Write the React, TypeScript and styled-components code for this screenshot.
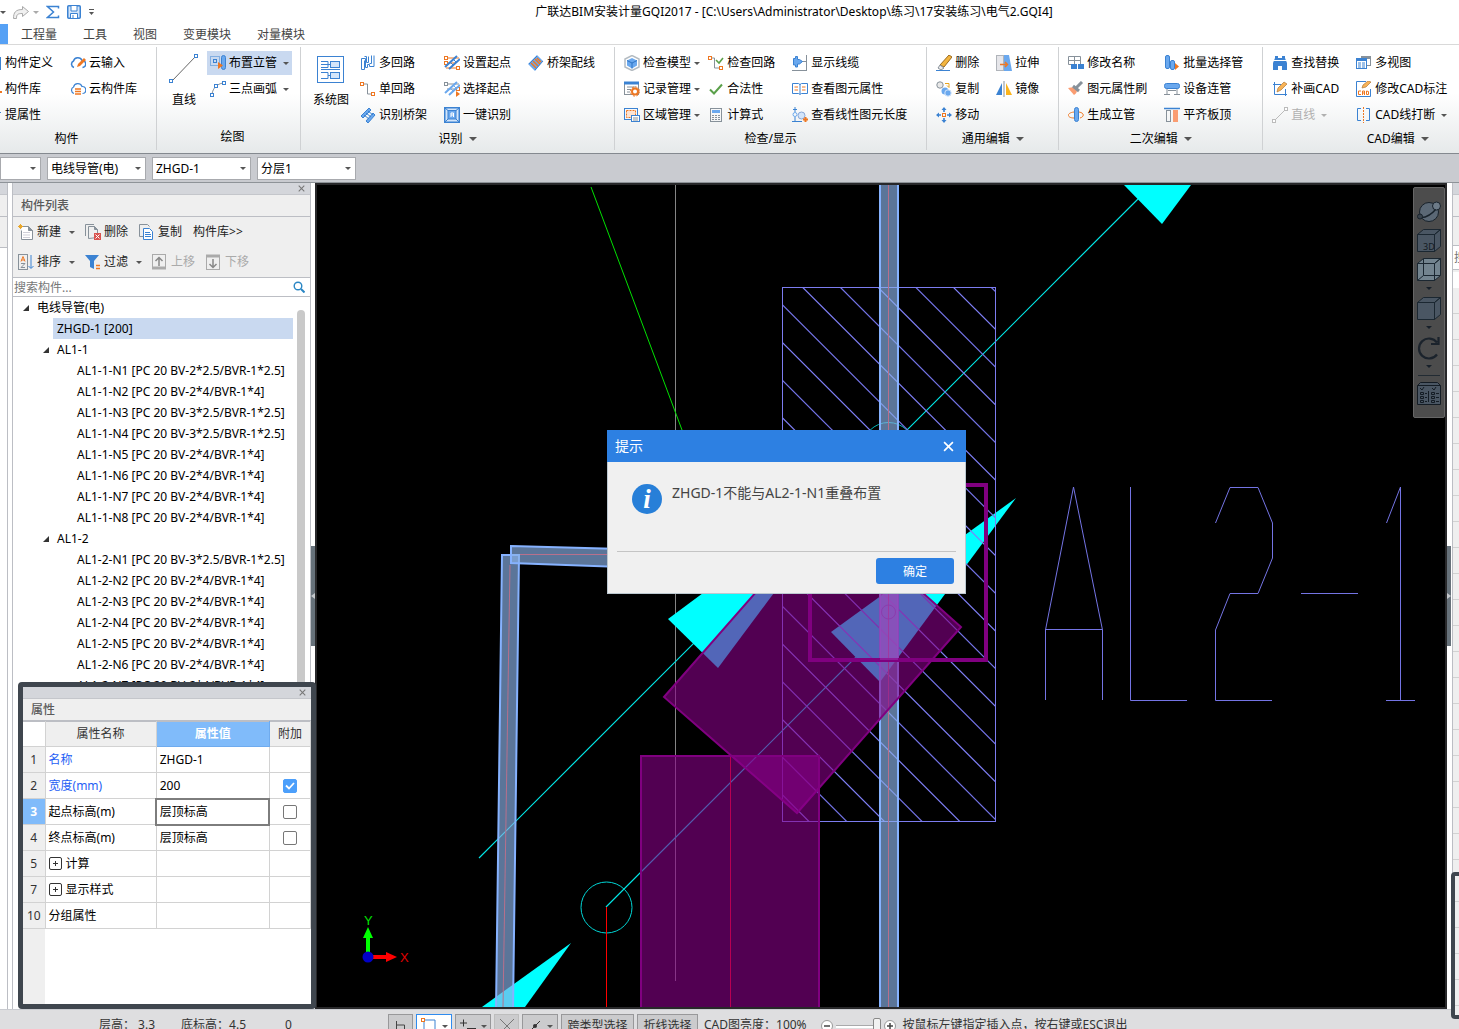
import React from "react";
import styled, { createGlobalStyle, css } from "styled-components";

const C = {
  blue: "#3b82d2",
  mid: "#6aa8ee",
  pale: "#d3e5fa",
  orange: "#ee7722",
  grey: "#87919a",
  green: "#5aa04a",
  accent: "#2d80e2",
  line: "#bcbec4",
};

const GlobalStyle = createGlobalStyle`
  *, *::before, *::after { box-sizing: border-box; }
  body { margin: 0; overflow: hidden; }
  body, button, input, select, table {
    font-family: "Noto Sans", "Noto Sans CJK SC", sans-serif;
    font-size: 12px;
    line-height: 16px;
  }
  button { border: 0; padding: 0; background: none; color: inherit; white-space: nowrap; }
  svg { display: block; flex: none; }
`;

/* ---------- shell ---------- */

const Shell = styled.div`
  position: relative;
  display: flex;
  flex-direction: column;
  height: 100vh;
  overflow: hidden;
  background: #fff;
  color: #000;
`;

const Caret = styled.span<{ $tone?: string; $big?: boolean }>`
  flex: none;
  width: 0;
  height: 0;
  border: solid transparent;
  border-width: ${(p) => (p.$big ? "4px 4px 0" : "3px 3px 0")};
  border-top-color: ${(p) => p.$tone || "#555"};
`;

const TitleBar = styled.header`
  display: flex;
  align-items: center;
  flex: 0 0 24px;
`;

const QuickAccess = styled.div`
  display: flex;
  align-items: center;
  flex: 0 0 129px;
  gap: 7px;
`;

const QuickButton = styled.button`
  display: flex;
  align-items: center;
  gap: 4px;
`;

const Title = styled.h1`
  flex: 1;
  margin: 0;
  font-size: 12px;
  font-weight: 400;
  text-align: center;
  white-space: nowrap;
`;

const TabBar = styled.nav`
  display: flex;
  flex: 0 0 21px;
  border-bottom: 1px solid #d9d9d9;
`;

const ActiveTab = styled.button`
  width: 8px;
  background: #56a1f5;
`;

const Tab = styled.button`
  padding: 2px 13px 0;
  color: #444;
`;

/* ---------- ribbon ---------- */

const Ribbon = styled.div`
  display: flex;
  flex: 0 0 109px;
  overflow: hidden;
  border-bottom: 1px solid #84898f;
  background: linear-gradient(#fff 45%, #e6e9ea);
`;

const Group = styled.section<{ $first?: boolean; $tight?: boolean; $last?: boolean }>`
  display: flex;
  flex-direction: column;
  flex: ${(p) => (p.$last ? "1 0 270px" : "none")};
  margin: 2px 0 3px ${(p) => (p.$first ? "-23px" : "0")};
  padding: 4px ${(p) => (p.$tight ? "8px" : "16px")} 0 6px;
  border-right: 1px solid #cfd1d3;
`;

const GroupBody = styled.div`
  display: flex;
  gap: 11px;
  height: 76px;
`;

const GroupColumn = styled.div<{ $pull?: boolean }>`
  display: flex;
  flex-direction: column;
  align-items: flex-start;
  gap: 2px;
  margin-left: ${(p) => (p.$pull ? "-9px" : "0")};
`;

const GroupLabel = styled.div`
  display: flex;
  align-items: center;
  justify-content: center;
  gap: 6px;
  height: 28px;
  margin-right: -10px;
`;

const Tool = styled.button<{ $active?: boolean; $disabled?: boolean; $snug?: boolean }>`
  display: flex;
  align-items: center;
  height: 24px;
  padding: 0 3px;
  gap: 3px;
  background: ${(p) => (p.$active ? "#c9d9f0" : "none")};
  color: ${(p) => (p.$disabled ? "#b0b0b0" : "#000")};
  ${Caret} { margin-left: ${(p) => (p.$snug ? "0" : "3px")}; }
`;

const BigTool = styled.button`
  display: flex;
  flex-direction: column;
  align-items: center;
  height: 60px;
  padding: 3px 6px 0;
  gap: 8px;
`;

/* ---------- context bar ---------- */

const ContextBar = styled.div`
  display: flex;
  align-items: center;
  flex: 0 0 29px;
  gap: 6px;
  border-bottom: 1px solid #8e9398;
  background: #c9cbd0;
`;

const SelectWrap = styled.label<{ $short?: boolean }>`
  position: relative;
  width: ${(p) => (p.$short ? "41px" : "99px")};
  height: 23px;
  ${Caret} { position: absolute; right: 5px; top: 10px; pointer-events: none; }
`;

const Select = styled.select`
  appearance: none;
  width: 100%;
  height: 100%;
  padding: 2px 14px 0 3px;
  border: 1px solid #a8aaae;
  border-radius: 0;
  background: #fff;
  color: #000;
`;

/* ---------- workspace ---------- */

const Workspace = styled.main`
  display: flex;
  flex: 1;
  min-height: 0;
`;

const SidePanel = styled.aside<{ $edge: "left" | "right" }>`
  display: flex;
  flex-direction: column;
  flex: 0 0 ${(p) => (p.$edge === "left" ? "8px" : "7px")};
  overflow: hidden;
  ${(p) =>
    p.$edge === "left"
      ? css`margin-right: 4px; border-right: 1px solid ${C.line};`
      : css`border-left: 1px solid ${C.line}; background: #efefef;`}
`;

const SideTools = styled.div<{ $h: number }>`
  flex: 0 0 ${(p) => p.$h}px;
  border-bottom: 1px solid ${C.line};
  background: #efefef;
`;

const SideSearch = styled.input`
  flex: 0 0 25px;
  width: 60px;
  margin: 28px 0 2px;
  padding: 0 1px;
  border: 1px solid ${C.line};
  border-left: 0;
  background: #fff;
`;

const SideRows = styled.div`
  flex: 1;
  border-top: 16px solid #fff;
  background: repeating-linear-gradient(#efefef 0 25px, #d2d2d2 25px 26px);
`;

const PanelGrip = styled.div`
  display: flex;
  align-items: center;
  justify-content: flex-end;
  flex: 0 0 12px;
  padding-right: 5px;
  border-bottom: 1px solid #c4c6cb;
  background: #d4d6db;
`;

const PanelTitle = styled.h2`
  flex: 0 0 22px;
  margin: 0;
  padding: 3px 8px 0;
  border-bottom: 1px solid ${C.line};
  background: #efefef;
  color: #5a5a5a;
  font-size: 12px;
  font-weight: 500;
`;

const ListPanel = styled.aside`
  display: flex;
  flex-direction: column;
  flex: 0 0 299px;
  overflow: hidden;
  border: solid ${C.line};
  border-width: 0 1px;
`;

const ListTools = styled.div`
  flex: 0 0 61px;
  border-bottom: 1px solid ${C.line};
  background: #efefef;
`;

const ListToolRow = styled.div`
  display: flex;
  align-items: center;
  height: 30px;
  padding-left: 5px;
  gap: 11px;
`;

const ListTool = styled.button<{ $disabled?: boolean }>`
  display: flex;
  align-items: center;
  gap: 3px;
  color: ${(p) => (p.$disabled ? "#aaa" : "#222")};
  ${Caret} { margin: 0 -1px 0 5px; }
`;

const SearchRow = styled.label`
  display: flex;
  align-items: center;
  flex: 0 0 19px;
  padding-right: 5px;
  border-bottom: 1px solid ${C.line};
`;

const SearchInput = styled.input`
  flex: 1;
  min-width: 0;
  height: 18px;
  padding: 0 1px;
  border: 0;
  outline: 0;
  background: none;
  &::placeholder { color: #777; }
`;

const TreeArea = styled.div`
  display: flex;
  flex: 1;
  min-height: 0;
  overflow: hidden;
`;

const Tree = styled.ul`
  flex: 0 0 280px;
  margin: 0;
  padding: 0;
  list-style: none;
`;

const TreeRow = styled.li<{ $level: number }>`
  display: flex;
  align-items: center;
  height: 21px;
  padding-left: ${(p) => 8 + p.$level * 20}px;
`;

const Twisty = styled.span`
  flex: 0 0 12px;
  padding-left: 1px;
`;

const TreeLabel = styled.span<{ $selected?: boolean }>`
  flex: 1;
  padding: 0 4px;
  line-height: 21px;
  white-space: nowrap;
  background: ${(p) => (p.$selected ? "#c9d9f0" : "none")};
`;

const ScrollThumb = styled.div`
  width: 8px;
  margin: 13px 0 0 4px;
  border-radius: 4px 4px 0 0;
  background: #c9c9c9;
`;

const Gutter = styled.div<{ $wide?: boolean }>`
  display: flex;
  align-items: center;
  flex: 0 0 ${(p) => (p.$wide ? "5px" : "4px")};
`;

const GutterHandle = styled.button`
  display: grid;
  place-items: center;
  width: 4px;
  height: 100px;
  background: #67727b;
`;

const CanvasFrame = styled.section`
  position: relative;
  flex: 1;
  min-width: 0;
  border: 2px solid #28282a;
  background: #000;
  overflow: hidden;
`;

const Scene = styled.svg`
  width: 100%;
  height: 100%;
`;

const ViewTools = styled.div`
  position: absolute;
  top: 2px;
  right: 0;
  display: flex;
  flex-direction: column;
  align-items: center;
  width: 32px;
  padding: 12px 0 7px;
  border: 1px solid #666;
  border-radius: 2px;
  background: #4c4c4c;
`;

const ViewTool = styled.button<{ $menu?: boolean }>`
  display: flex;
  flex-direction: column;
  align-items: center;
  gap: 5px;
  margin-bottom: ${(p) => (p.$menu ? "7px" : "5px")};
`;

const ViewRule = styled.hr`
  width: 22px;
  margin: 0 0 5px;
  border: 0;
  border-top: 1px solid #222b33;
`;

/* ---------- property window ---------- */

const FloatWindow = styled.section`
  position: absolute;
  left: 18px;
  bottom: 20px;
  display: flex;
  flex-direction: column;
  width: 298px;
  height: 327px;
  border: 5px solid #3f464e;
  border-radius: 4px;
  background: linear-gradient(90deg, #efefef 22px, #fff 22px);
`;

const EdgeWindow = styled.section`
  position: absolute;
  right: -200px;
  bottom: 10px;
  width: 208px;
  height: 147px;
  border: 4px solid #3f464e;
  border-radius: 4px;
  background: repeating-linear-gradient(#efefef 0 25px, #d2d2d2 25px 26px);
`;

const PropTable = styled.table`
  width: 288px;
  border-collapse: collapse;
  table-layout: fixed;
  border-top: 1px solid ${C.line};
`;

const HeadCell = styled.th<{ $w: number; $active?: boolean; $blank?: boolean }>`
  width: ${(p) => p.$w}px;
  height: 25px;
  padding: 0;
  border: 1px solid ${(p) => (p.$active ? "#6fabee" : "#d2d2d2")};
  border-top-width: 0;
  border-left-width: 0;
  background: ${(p) => (p.$active ? "#80bbfa" : p.$blank ? "#fff" : "#efefef")};
  color: ${(p) => (p.$active ? "#fff" : "#333")};
  font-weight: ${(p) => (p.$active ? 700 : 400)};
`;

const NumCell = styled.th<{ $active?: boolean }>`
  height: 26px;
  padding: 0;
  border: 1px solid #d2d2d2;
  border-left: 0;
  background: ${(p) => (p.$active ? "#80bbfa" : "#efefef")};
  color: ${(p) => (p.$active ? "#fff" : "#333")};
  font-weight: ${(p) => (p.$active ? 700 : 400)};
`;

const Cell = styled.td<{ $link?: boolean; $focus?: boolean }>`
  padding: 0 3px;
  border: 1px solid #d2d2d2;
  background: #fff;
  color: ${(p) => (p.$link ? "#1f5ff5" : "#000")};
  ${(p) => p.$focus && css`outline: 2px solid #7d7d7d; outline-offset: -1px;`}
`;

const CellLine = styled.span`
  display: flex;
  align-items: center;
  gap: 4px;
`;

const CheckWrap = styled.label`
  display: grid;
  justify-content: center;
  align-items: center;
  justify-items: center;
  & > * { grid-area: 1 / 1; }
`;

const Check = styled.input`
  appearance: none;
  width: 14px;
  height: 14px;
  margin: 0;
  border: 1px solid #777;
  border-radius: 2px;
  background: #fff;
  &:checked { border-color: #4c9ffb; background: #4c9ffb; }
`;

/* ---------- status bar ---------- */

const StatusBar = styled.footer`
  display: flex;
  align-items: flex-start;
  flex: 0 0 20px;
  padding-top: 4px;
  border-top: 1px solid #c9cbd0;
  overflow: hidden;
  background: #dedee0;
  color: #333;
  white-space: nowrap;
`;

const Readouts = styled.div`
  display: flex;
  flex: 0 0 388px;
  gap: 26px;
  padding: 3px 0 0 99px;
`;

const Readout = styled.span<{ $push?: boolean }>`
  margin-left: ${(p) => (p.$push ? "13px" : "0")};
`;

const StatusButton = styled.button<{ $w?: number; $on?: boolean; $dim?: boolean }>`
  display: flex;
  align-items: center;
  justify-content: center;
  flex: none;
  gap: 4px;
  width: ${(p) => (p.$w ? `${p.$w}px` : "auto")};
  height: 24px;
  margin-right: 3px;
  padding: 0 5px;
  border: 1px solid ${(p) => (p.$on ? "#2f8bee" : p.$dim ? "#bdbdbd" : "#98989a")};
  background: ${(p) => (p.$on ? "#fff" : "#cbcbcd")};
`;

const StatusText = styled.span`
  padding: 3px 3px 0;
`;

const ZoomControl = styled.div`
  display: flex;
  align-items: center;
  height: 24px;
  gap: 3px;
  padding: 0 4px 0 11px;
`;

const RoundButton = styled.button`
  display: grid;
  place-items: center;
  width: 12px;
  height: 12px;
  border: 1px solid #999;
  border-radius: 6px;
  background: #fff;
`;

const Slider = styled.input`
  appearance: none;
  width: 45px;
  height: 18px;
  margin: 0;
  background: linear-gradient(transparent 8px, #a9a9ab 8px 9px, #fff 9px 11px, transparent 11px);
  &::-webkit-slider-thumb {
    appearance: none;
    width: 8px;
    height: 17px;
    border: 1px solid #888;
    border-radius: 2px;
    background: #f2f2f2;
  }
`;

/* ---------- message box ---------- */

const Dialog = styled.section`
  position: absolute;
  left: 607px;
  top: 430px;
  width: 359px;
`;

const DialogHead = styled.header`
  display: flex;
  align-items: center;
  justify-content: space-between;
  height: 32px;
  padding: 0 12px 0 8px;
  background: ${C.accent};
  color: #fff;
`;

const DialogTitle = styled.h2`
  margin: 0;
  font-size: 14px;
  font-weight: 400;
`;

const DialogBody = styled.div`
  padding: 0 9px 9px;
  border: 1px solid #bcc8d0;
  border-top: 0;
  background: #f0f0f0;
`;

const DialogMessage = styled.div`
  display: flex;
  gap: 10px;
  height: 90px;
  padding: 22px 15px 0;
  border-bottom: 1px solid #c4c4c4;
`;

const Message = styled.p`
  margin: 0;
  color: #444;
  font-size: 14px;
  line-height: 18px;
`;

const DialogActions = styled.div`
  display: flex;
  justify-content: flex-end;
  padding: 6px 2px 0;
`;

const Primary = styled.button`
  width: 78px;
  height: 26px;
  padding-top: 2px;
  border-radius: 3px;
  background: ${C.accent};
  color: #fff;
`;

/* ---------- icons ---------- */

const Svg = ({ s = 16, children }: { s?: number; children: React.ReactNode }) => (
  <svg width={s} height={s} viewBox={`0 0 ${s} ${s}`} fill="none" stroke={C.blue} aria-hidden="true">
    {children}
  </svg>
);

const cloud = "M4 12.500a3.500 3.500 0 0 1-.5-6.500A4.500 4.500 0 0 1 12 5.500a3.500 3.500 0 0 1 .5 7";
const sq = (x: number, y: number, c: string = C.orange) => (
  <rect x={x} y={y} width="3" height="3" stroke={c} fill="#fff" />
);

const icons: Record<string, React.ReactNode> = {
  define: <Svg><rect x="2.500" y="2.500" width="12" height="12" fill={C.mid} /></Svg>,
  library: <Svg><path d="M2 3h9v9H2z" /><path d="M10 11h6M13 8v6" stroke={C.orange} strokeWidth="2" /></Svg>,
  extract: <Svg><path d="M2 5.500h13" /></Svg>,
  cloudIn: <Svg><path d={cloud} strokeWidth="1.500" /><path d="M7 12l1-3 6-6 2 2-6 6z" fill={C.orange} stroke="none" /></Svg>,
  cloudLib: <Svg><path d={cloud} strokeWidth="1.200" /><path d="M5 8h6M5 10.500h6M5 13h6" stroke={C.orange} strokeWidth="1.500" /></Svg>,
  riser: (
    <Svg>
      <rect x=".5" y="1.500" width="9" height="9" strokeDasharray="1 1" />
      <rect x="3.500" y="4.500" width="3" height="3" />
      <rect x="11.500" y=".5" width="4" height="14" rx="2" fill={C.mid} />
      <path d="M8 7v7l5-3.500z" fill={C.orange} stroke="none" />
    </Svg>
  ),
  arc: <Svg><path d="M2 13C3 7 7 3 13 2" stroke={C.grey} />{sq(0.5, 12.5, C.blue)}{sq(4.5, 3.5, C.blue)}{sq(12.5, 0.5, C.blue)}</Svg>,
  multi: <Svg><path d="M1.500 3.500h4v9h2v-3h2v2h4.500V.500M1.500 3.500v11h3v-9M8.500 1.500v6h-2v-6h-2M11.500 .5v8h-2" /></Svg>,
  single: <Svg><path d="M2 3h5.500v10h5" stroke={C.grey} />{sq(0.5, 1.5)}{sq(11.5, 11.5)}</Svg>,
  bridge: (
    <Svg>
      <path d="M1 9l8-8 2 2-8 8zM6 14l7-8 2 2-7 8z" fill={C.mid} />
      <path d="M4 8l5 4M6 6l5 4M8 4l5 4" />
    </Svg>
  ),
  setStart: (
    <Svg>
      <path d="M3 3h12M3 8h9M2 13h12" stroke={C.orange} />{sq(0.5, 1.5)}{sq(0.5, 6.5)}{sq(12.5, 11.5)}
      <path d="M1 12L13 1M5 14L16 4" strokeWidth="2" /><path d="M6 7l4 4M9 4l4 4" />
    </Svg>
  ),
  pickStart: (
    <Svg>
      <path d="M3 3h12M3 8h9" stroke={C.grey} />{sq(0.5, 1.5, C.grey)}{sq(12.5, 6.5)}
      <path d="M1 12L13 1M5 14L16 4" strokeWidth="2" stroke={C.mid} /><path d="M6 7l4 4M9 4l4 4" stroke={C.mid} />
      <path d="M12 10v6l4-3z" fill={C.orange} stroke="none" />
    </Svg>
  ),
  oneKey: (
    <Svg>
      <rect x=".75" y=".75" width="14.500" height="14.500" fill={C.pale} strokeWidth="1.500" />
      <rect x="4" y="3.500" width="8" height="8.500" fill={C.mid} />
      <path d="M1 1l3 2.500M15 1l-3 2.500M1 15l3-3M15 15l-3-3" />
      <path d="M7 10V6h2.500v4M7 8h2" stroke="#fff" />
    </Svg>
  ),
  wiring: (
    <Svg>
      <path d="M0 9l9-9 6 6-8 10z" fill={C.mid} stroke="none" />
      <path d="M3 8l5 5M5 6l5 5M7 4l5 5M9 3l4 4" stroke={C.orange} strokeWidth="1.500" />
      <path d="M1 9L9 1M7 15l8-9" />
    </Svg>
  ),
  model: (
    <Svg>
      <path d="M8 .5l7 3.500v8l-7 3.500L1 12V4z" stroke="#b5bcc2" strokeWidth="1.500" />
      <path d="M8 3l5 2.500v5L8 13.500l-5-3v-5z" fill={C.mid} stroke="none" />
      <path d="M3 5.500L8 8l5-2.500M8 8v5.500" stroke="#2f74c4" />
    </Svg>
  ),
  record: (
    <Svg>
      <rect x=".5" y="1.500" width="14" height="12" stroke={C.grey} />
      <path d="M0 2h15" strokeWidth="3" /><path d="M3 6h9M3 8.500h4M3 11h3" stroke={C.grey} />
      <circle cx="11" cy="10.500" r="3" stroke={C.orange} strokeWidth="2" fill="#fff" />
      <circle cx="11" cy="10.500" r="4.600" stroke={C.orange} strokeWidth="1" strokeDasharray="2 1.600" />
    </Svg>
  ),
  region: (
    <Svg>
      <rect x=".5" y="1.500" width="13" height="11" />
      <rect x="2.500" y="3.500" width="9" height="7" stroke={C.orange} strokeDasharray="2 1" fill="#fde3d2" />
      <rect x="7.500" y="8.500" width="8" height="6" fill="#fff" /><path d="M9 11h5M9 13h5" stroke={C.grey} />
    </Svg>
  ),
  loopCheck: (
    <Svg>
      <path d="M2 3h4.500v10h6" stroke={C.grey} />{sq(0.5, 1.5)}{sq(11.5, 11.5)}
      <path d="M8 5l3 3 4-5" stroke={C.green} strokeWidth="1.600" />
    </Svg>
  ),
  legal: <Svg><path d="M2 8.500l4 4L14 3.500" stroke={C.green} strokeWidth="2" /></Svg>,
  calc: (
    <Svg>
      <rect x="2.500" y="1.500" width="11" height="13" stroke={C.grey} />
      <rect x="4" y="3" width="8" height="3" fill={C.mid} stroke="none" />
      <path d="M4 8.500h8M4 10.500h8M4 12.500h8" stroke={C.grey} strokeDasharray="2 1" />
    </Svg>
  ),
  cable: (
    <Svg>
      <path d="M14.500 0v15.500M0 15.500h15M10 6.500h5" stroke={C.grey} />
      <path d="M1.500 3.500h2v-2h2v3h2l3 2-3 2.500h-2v3h-2v-2h-2z" fill={C.mid} />
    </Svg>
  ),
  book: (
    <Svg>
      <path d="M.5 2.500h6l1.500 1 1.500-1h6v10h-6l-1.500 1-1.500-1h-6zM8 3v10" />
      <path d="M2.500 6H6M2.500 9H6M10 6h3.500M10 9h3.500" stroke={C.orange} />
    </Svg>
  ),
  length: (
    <Svg>
      <path d="M3 0v5M3 10v5M1 2.500h4M0 14.500h10" /><circle cx="3" cy="7.500" r="2" stroke={C.mid} />
      <circle cx="9.500" cy="8.500" r="3.500" fill={C.pale} stroke="#8aa8d8" />
      <path d="M11 12.500h5M13.500 10v5" stroke={C.orange} strokeWidth="2" />
    </Svg>
  ),
  brush: (
    <Svg>
      <path d="M4 10l9-10 3 2-8 10z" fill="#f3b53f" stroke="#9c6a1e" />
      <path d="M4 10l4 3-3 2-3-2z" fill="#e9e9e9" stroke={C.grey} />
      <path d="M0 15.500h14" />
    </Svg>
  ),
  copy2: (
    <Svg>
      <circle cx="4" cy="4" r="3.200" fill="#e8e8e8" stroke={C.grey} />
      <path d="M9 2.500h4v4l-2-2" stroke="#e8a41c" />
      <circle cx="9" cy="10" r="3.500" fill={C.mid} stroke="none" /><circle cx="12" cy="12" r="3.200" fill={C.mid} stroke={C.pale} />
    </Svg>
  ),
  move: (
    <Svg>
      <path d="M8 1v4M8 11v4M1 8h4M11 8h4" strokeWidth="1.600" />
      <path d="M8 0l2.500 3h-5zM8 16l2.500-3h-5zM0 8l3-2.500v5zM16 8l-3-2.500v5z" fill={C.blue} stroke="none" />
      <rect x="6.500" y="6.500" width="3" height="3" stroke={C.orange} />
    </Svg>
  ),
  stretch: (
    <Svg>
      <rect x=".5" y=".5" width="7" height="15" fill="#e6e6ea" stroke="#b0b4ba" />
      <path d="M8 0h5l3 16H8z" fill={C.mid} stroke="none" />
      <path d="M4 9.500h7M9 7l2.500 2.500L9 12" stroke={C.orange} strokeWidth="1.500" />
    </Svg>
  ),
  mirror: (
    <Svg>
      <path d="M6 2v12H0z" fill={C.blue} stroke="none" /><path d="M10 2v12h6z" fill="#fbb41b" stroke="none" />
      <path d="M8 0v16" stroke={C.grey} />
    </Svg>
  ),
  rename: (
    <Svg>
      <path d="M.5 1.500h12v8H.5zM.5 5.500h12M6.500 1.500v8" stroke={C.grey} />
      <rect x="3" y="9" width="13" height="5" fill={C.blue} stroke="none" />
      <path d="M9.500 8v7M7.500 7.500h4M7.500 15.500h4" stroke="#fff" />
    </Svg>
  ),
  paint: (
    <Svg>
      <path d="M0 7l6 7c2-1 3-3 3-5L6 6z" fill="#fa9d72" stroke="none" />
      <path d="M5 5l6 5M8 7l6-6" stroke={C.grey} strokeWidth="3" />
    </Svg>
  ),
  genRiser: (
    <Svg>
      <path d="M6 5c-8 1-7 6 0 6M11 5c6 1 5 5 1 6" stroke={C.orange} />
      <rect x="6.500" y=".5" width="4" height="14" rx="2" fill={C.mid} />
    </Svg>
  ),
  batch: (
    <Svg>
      <rect x="1.500" y=".5" width="4" height="13" rx="1.500" fill={C.mid} /><rect x="6.500" y="5.500" width="4" height="9" rx="1.500" fill={C.mid} />
      <path d="M11 8v7l4-3.500z" fill={C.orange} stroke="none" />
    </Svg>
  ),
  device: (
    <Svg>
      <path d="M3 6v7M13 6v7M0 13.500h6M10 13.500h6M4 9.500h8" stroke={C.grey} />
      <rect x=".5" y="2.500" width="15" height="5" rx="2" fill={C.mid} />
    </Svg>
  ),
  flush: (
    <Svg>
      <path d="M0 1.500h16" strokeWidth="1.500" /><rect x="2.500" y="3.500" width="4" height="11" stroke={C.grey} />
      <rect x="9" y="3" width="5" height="12" fill="#fa9d72" stroke="none" />
    </Svg>
  ),
  find: (
    <Svg>
      <path d="M1 15V8l2-5V1h3v2h4V1h3v2l2 5v7h-5v-4H6v4z" fill={C.blue} stroke="none" />
      <path d="M0 5.500h16" stroke="#fff" />
    </Svg>
  ),
  redraw: (
    <Svg>
      <path d="M2.500 1v12.500H15M1 3.500h8M13.500 8v7" />
      <path d="M5 11l1-4 6-6 3 2-6 6z" fill="#f8b357" stroke="#b07a3a" strokeWidth=".7" />
    </Svg>
  ),
  lineOff: <Svg><path d="M2 14L14 2" stroke="#bbb" />{sq(0.5, 12.5, "#bbb")}{sq(12.5, 0.5, "#bbb")}</Svg>,
  views: (
    <Svg>
      <rect x="5.500" y="1.500" width="9" height="9" stroke={C.grey} /><path d="M5 3h10" stroke={C.grey} strokeWidth="2" />
      <rect x=".5" y="3.500" width="10" height="10" fill="#fff" /><path d="M1 5h9" strokeWidth="2" />
      <path d="M2 8h7M2 10h7M2 12h7" strokeDasharray="3 1" />
    </Svg>
  ),
  editCad: (
    <Svg>
      <path d="M10 .5H.5v15h14V8" />
      <path d="M6 7l1-3 5-4 3 1-5 5z" fill="#f8b357" stroke="#b07a3a" strokeWidth=".7" />
      <path d="M5 10H2.500v3.500H5M6.500 14v-4h2v4M6.500 12h2M10.500 10v3.500h2V10.500z" stroke={C.orange} />
    </Svg>
  ),
  split: (
    <Svg>
      <path d="M5 1.500H1.500v12H5M10 1.500h3.500v12H10" /><path d="M7.500 0v16" stroke={C.orange} strokeDasharray="2 1" />
    </Svg>
  ),
  fresh: (
    <Svg>
      <path d="M4.500 2.500h6l4 4v9h-11v-9" stroke={C.grey} fill="#fff" /><path d="M10.500 2.500v4h4z" fill={C.grey} stroke={C.grey} />
      <path d="M5 8.500h7M5 11h7M5 13.500h7" stroke="#cfcfd8" />
      <path d="M2.500 0v5M0 2.500h5M1 1l3 3M4 1L1 4" stroke="#e9a72b" />
    </Svg>
  ),
  remove: (
    <Svg>
      <path d="M.5 12V.5H9M3.500 14.500v-12h6l3 3v8z" stroke={C.grey} /><path d="M9.500 2.500v3h3z" fill={C.grey} stroke={C.grey} />
      <rect x="9" y="9" width="7" height="7" fill="#d9534f" stroke="none" /><path d="M10.500 10.500l4 4M14.500 10.500l-4 4" stroke="#fff" />
    </Svg>
  ),
  duplicate: (
    <Svg>
      <path d="M.5 12.500V.5h8l2 2M.5 12.500H4" stroke={C.grey} /><path d="M4.500 4.500h6l3 3v8h-9z" fill="#fff" />
      <path d="M6 8.500h5M6 10.500h6M6 12.500h6" />
    </Svg>
  ),
  sort: (
    <Svg>
      <rect x=".5" y=".5" width="9" height="15" stroke={C.grey} /><path d="M3 7.500l2-5 2 5M3.500 6h3" stroke={C.orange} />
      <path d="M3 9.500h4l-4 4h4" stroke={C.grey} /><path d="M13 1v13M10.500 12l2.500 2.500L15.500 12" />
    </Svg>
  ),
  filter: (
    <Svg>
      <path d="M0 1h14L9 7v8l-4-2V7z" fill={C.blue} stroke="none" /><path d="M11 11.500h4M11 14.500h4" stroke={C.orange} strokeWidth="1.500" />
    </Svg>
  ),
  up: <Svg><rect x=".5" y=".5" width="13" height="14" stroke="#aaa" /><path d="M0 14h14" stroke="#aaa" strokeWidth="3" /><path d="M7 12V4M3.500 7L7 3.500 10.500 7" stroke="#888" strokeWidth="1.500" /></Svg>,
  down: <Svg><rect x=".5" y="1.500" width="13" height="14" stroke="#aaa" /><path d="M0 2h14" stroke="#aaa" strokeWidth="3" /><path d="M7 5v8M3.500 10L7 13.500 10.500 10" stroke="#888" strokeWidth="1.500" /></Svg>,
};

const Close = ({ s = 7, tone = "#777" }: { s?: number; tone?: string }) => (
  <svg width={s} height={s} viewBox="0 0 10 10" stroke={tone} strokeWidth="1.500" aria-hidden="true">
    <path d="M1 1l8 8M9 1L1 9" />
  </svg>
);

const Cube = ({ glass, label }: { glass?: boolean; label?: string }) => (
  <svg width="24" height="24" viewBox="0 0 24 24" stroke="#1b2731" fill={glass ? "#73848f" : "#4a5663"} aria-hidden="true">
    <path d="M.5 5.500h17v17H.5zM.5 5.500l6-5h17l-6 5zM17.500 5.500l6-5v17l-6 5z" />
    {glass && <path d="M6.500.5v17h17M.5 22.500l6-5" fill="none" />}
    {label && <text x="6" y="21" fontSize="9" stroke="none" fill="#121a22" fontFamily="Noto Sans">{label}</text>}
  </svg>
);

/* ---------- data ---------- */

type Item = { icon: string; text: string; menu?: boolean; active?: boolean; off?: boolean };
type GroupData = {
  name: string;
  menu?: boolean;
  snug?: boolean;
  big?: { icon: React.ReactNode; text: string };
  columns: Item[][];
};

const groups: GroupData[] = [
  {
    name: "构件",
    columns: [
      [{ icon: "define", text: "构件定义" }, { icon: "library", text: "构件库" }, { icon: "extract", text: "提属性" }],
      [{ icon: "cloudIn", text: "云输入" }, { icon: "cloudLib", text: "云构件库" }],
    ],
  },
  {
    name: "绘图",
    big: {
      text: "直线",
      icon: <Svg s={30}><path d="M3 27L27 2" stroke="#666" />{sq(0.5, 25.5, C.blue)}{sq(25.5, 0.5, C.blue)}</Svg>,
    },
    columns: [[{ icon: "riser", text: "布置立管", menu: true, active: true }, { icon: "arc", text: "三点画弧", menu: true }]],
  },
  {
    name: "识别",
    menu: true,
    big: {
      text: "系统图",
      icon: (
        <Svg s={30}>
          <rect x="1.500" y="2.500" width="26" height="26" />
          <path d="M5 7.500h7v6H5M5 10.500h7M14 10.500h-2M5 15.500h19M5 18.500h7v6H5M14 21.500h-2" />
          <rect x="14.500" y="7.500" width="9" height="6" fill={C.pale} /><rect x="14.500" y="18.500" width="9" height="6" fill={C.pale} />
        </Svg>
      ),
    },
    columns: [
      [{ icon: "multi", text: "多回路" }, { icon: "single", text: "单回路" }, { icon: "bridge", text: "识别桥架" }],
      [{ icon: "setStart", text: "设置起点" }, { icon: "pickStart", text: "选择起点" }, { icon: "oneKey", text: "一键识别" }],
      [{ icon: "wiring", text: "桥架配线" }],
    ],
  },
  {
    name: "检查/显示",
    snug: true,
    columns: [
      [{ icon: "model", text: "检查模型", menu: true }, { icon: "record", text: "记录管理", menu: true }, { icon: "region", text: "区域管理", menu: true }],
      [{ icon: "loopCheck", text: "检查回路" }, { icon: "legal", text: "合法性" }, { icon: "calc", text: "计算式" }],
      [{ icon: "cable", text: "显示线缆" }, { icon: "book", text: "查看图元属性" }, { icon: "length", text: "查看线性图元长度" }],
    ],
  },
  {
    name: "通用编辑",
    menu: true,
    columns: [
      [{ icon: "brush", text: "删除" }, { icon: "copy2", text: "复制" }, { icon: "move", text: "移动" }],
      [{ icon: "stretch", text: "拉伸" }, { icon: "mirror", text: "镜像" }],
    ],
  },
  {
    name: "二次编辑",
    menu: true,
    columns: [
      [{ icon: "rename", text: "修改名称" }, { icon: "paint", text: "图元属性刷" }, { icon: "genRiser", text: "生成立管" }],
      [{ icon: "batch", text: "批量选择管" }, { icon: "device", text: "设备连管" }, { icon: "flush", text: "平齐板顶" }],
    ],
  },
  {
    name: "CAD编辑",
    menu: true,
    columns: [
      [{ icon: "find", text: "查找替换" }, { icon: "redraw", text: "补画CAD" }, { icon: "lineOff", text: "直线", menu: true, off: true }],
      [{ icon: "views", text: "多视图" }, { icon: "editCad", text: "修改CAD标注" }, { icon: "split", text: "CAD线打断", menu: true }],
    ],
  },
];

const thin = "BV-2*4/BVR-1*4";
const circuits = (box: string, specs: string[]) =>
  specs.map((spec, i) => ({ level: 2, text: `${box}-N${i + 1} [PC 20 ${spec}]`, open: false, selected: false }));

const tree = [
  { level: 0, text: "电线导管(电)", open: true, selected: false },
  { level: 1, text: "ZHGD-1 [200]", open: false, selected: true },
  { level: 1, text: "AL1-1", open: true, selected: false },
  ...circuits("AL1-1", ["BV-2*2.5/BVR-1*2.5", thin, "BV-3*2.5/BVR-1*2.5", "BV-3*2.5/BVR-1*2.5", thin, thin, thin, thin]),
  { level: 1, text: "AL1-2", open: true, selected: false },
  ...circuits("AL1-2", ["BV-3*2.5/BVR-1*2.5", thin, thin, thin, thin, thin, thin]),
];

const properties: { n: number; name: string; value?: string; link?: boolean; check?: boolean; focus?: boolean; fold?: boolean }[] = [
  { n: 1, name: "名称", value: "ZHGD-1", link: true },
  { n: 2, name: "宽度(mm)", value: "200", link: true, check: true },
  { n: 3, name: "起点标高(m)", value: "层顶标高", check: false, focus: true },
  { n: 4, name: "终点标高(m)", value: "层顶标高", check: false },
  { n: 5, name: "计算", fold: true },
  { n: 7, name: "显示样式", fold: true },
  { n: 10, name: "分组属性" },
];

/* ---------- drawing ---------- */

const CYAN = "#00ffff";
const PLUM = "#800080";
const hatch = Array.from({ length: 20 }, (_, i) => 606 + (i - 14) * 37.7);

const Drawing = () => (
  <Scene viewBox="317 185 1128 822" preserveAspectRatio="xMinYMin slice" fill="none" role="img" aria-label="CAD">
    <defs>
      <clipPath id="box"><rect x="782" y="288" width="214" height="534" /></clipPath>
    </defs>
    <path d="M675.500 185V981" stroke="#858585" />
    <path d="M591 187L700 478" stroke="#00e000" />
    <path d="M479 858L1145 192M606 907L900 613" stroke="#00e5e5" strokeWidth="1.200" />
    <g fill={CYAN}>
      <path d="M1124 185h67l-29 39z" />
      <path d="M668 619l50 49L861 476z" />
      <path d="M831 632l49 50L1016 498z" />
      <path d="M571 943l-89 64h43z" />
    </g>
    <circle cx="606.500" cy="907.500" r="25.500" stroke="#00d5d5" />
    <circle cx="888.500" cy="448.500" r="26" stroke="#00b5b5" />
    <path d="M606.500 907v100M730.500 757v250" stroke="#ff0000" />
    <g clipPath="url(#box)">
      {hatch.map((y, i) => (
        <path key={i} d={`M782 ${y}l214 214`} stroke={i % 2 ? "#8080f8" : "#7474e8"} strokeWidth="1.200" />
      ))}
    </g>
    <rect x="782.500" y="287.500" width="213" height="534" stroke="#7c7cf0" />
    <g fill="#8ab2e8" fillOpacity=".66" stroke="#86b2ff" strokeWidth="2">
      <rect x="880" y="180" width="18" height="840" />
      <path d="M502 555h17L513 1010H496z" />
      <path d="M511 546l110 3v18l-110-4z" />
    </g>
    <path d="M888.500 185v822M510 565L503 1007M520 554.500h90" stroke="#b8708c" />
    <g fill="#880088" fillOpacity=".6" stroke={PLUM} strokeWidth="2">
      <path d="M664 697L829 509 961 627 797 813z" />
      <rect x="641" y="756" width="178" height="260" />
    </g>
    <rect x="810" y="485" width="176" height="175" stroke={PLUM} strokeWidth="4" />
    <rect x="880" y="590" width="18" height="70" fill="#a850c8" fillOpacity=".35" />
    <circle cx="888.500" cy="612" r="7" stroke="#8c3cae" />
    <g stroke="#7474e4">
      <path d="M1045.500 700V630L1073.500 487 1102.500 630V700M1045 629.500h57" />
      <path d="M1130.500 487V700.500H1187" />
      <path d="M1215.500 523L1230 487.500H1258L1272.500 523V558L1258 593.500H1230L1215.500 630V700.500H1272" />
      <path d="M1301 593.500h57" />
      <path d="M1386.500 523L1400.500 487V700M1386 700.500h29" />
    </g>
    <path d="M368 957V936" stroke="#00ff00" strokeWidth="4" />
    <path d="M363 938l5-11 5 11z" fill="#00ff00" />
    <path d="M368 957H387" stroke="#ff0000" strokeWidth="4" />
    <path d="M386 952l11 5-11 5z" fill="#ff0000" />
    <circle cx="368" cy="957" r="5.500" fill="#0000c8" />
    <text x="364" y="925" fontSize="13" fill="#00e000" fontFamily="Liberation Sans">Y</text>
    <text x="400" y="962" fontSize="13" fill="#e00000" fontFamily="Liberation Sans">X</text>
  </Scene>
);

const ViewPalette = () => (
  <ViewTools>
    <ViewTool aria-label="动态观察">
      <svg width="24" height="24" viewBox="0 0 24 24" fill="#5b6875" stroke="#18222b" aria-hidden="true">
        <circle cx="12" cy="12" r="9.500" /><path d="M1 17c6 2 13-2 19-9" fill="none" strokeWidth="1.500" />
        <circle cx="19.500" cy="6" r="4" fill="#6d7b88" /><circle cx="3" cy="16.500" r="2.500" fill="#39434d" />
      </svg>
    </ViewTool>
    <ViewTool aria-label="三维"><Cube label="3D" /></ViewTool>
    <ViewTool $menu aria-label="线框"><Cube glass /><Caret $tone="#17202a" /></ViewTool>
    <ViewTool $menu aria-label="实体"><Cube /><Caret $tone="#17202a" /></ViewTool>
    <ViewTool $menu aria-label="旋转">
      <svg width="24" height="24" viewBox="0 0 24 24" fill="none" stroke="#1b232c" strokeWidth="2.200" aria-hidden="true">
        <path d="M20 18.500A10 10 0 1 1 20 6.500M21.500 1v7H14" />
      </svg>
      <Caret $tone="#17202a" />
    </ViewTool>
    <ViewRule />
    <ViewTool aria-label="显示设置">
      <svg width="24" height="24" viewBox="0 0 24 24" fill="#4a5663" stroke="#141c24" aria-hidden="true">
        <path d="M.5 4.500l3-3h17l3 3v19H.5zM.5 4.500h23M11.500 10v11" />
        <path d="M3 7l2 2 2-3M15 7l2 2 2-3M3.500 11.500h3v2h-3zM3.500 15.500h3v2h-3zM3.500 19.500h3v2h-3zM14.500 11.500h3v2h-3zM14.500 15.500h3v2h-3zM14.500 19.500h3v2h-3zM8 12.500h2M8 16.500h2M8 20.500h2M19 12.500h3M19 16.500h3M19 20.500h3" fill="none" />
      </svg>
    </ViewTool>
  </ViewTools>
);

/* ---------- app ---------- */

const RibbonGroup = ({ data, index }: { data: GroupData; index: number }) => (
  <Group $first={index === 0} $tight={index === 1} $last={index === groups.length - 1}>
    <GroupBody>
      {data.big && (
        <BigTool>
          {data.big.icon}
          {data.big.text}
        </BigTool>
      )}
      {data.columns.map((items, i) => (
        <GroupColumn key={i} $pull={(i === 0 && !!data.big) || (i === 1 && data.snug)}>
          {items.map((t) => (
            <Tool key={t.text} $active={t.active} $disabled={t.off} $snug={data.snug} disabled={t.off}>
              {icons[t.icon]}
              {t.text}
              {t.menu && <Caret $tone={t.off ? "#b0b0b0" : undefined} />}
            </Tool>
          ))}
        </GroupColumn>
      ))}
    </GroupBody>
    <GroupLabel>
      {data.name}
      {data.menu && <Caret $big />}
    </GroupLabel>
  </Group>
);

const ComboBox = ({ label, value, short }: { label: string; value: string; short?: boolean }) => (
  <SelectWrap $short={short}>
    <Select aria-label={label} defaultValue={value}>
      <option>{value}</option>
    </Select>
    <Caret />
  </SelectWrap>
);

export default function App() {
  return (
    <Shell>
      <GlobalStyle />
      <TitleBar>
        <QuickAccess>
          <QuickButton aria-label="撤销"><Caret /></QuickButton>
          <QuickButton aria-label="重做">
            <Svg><path d="M.5 14.500c0-6 2-9 9-9v-3l6 5-6 5v-3c-5 0-6 1-6 5z" fill="#f0f0f0" stroke="#aaa" /></Svg>
            <Caret $tone="#aaa" />
          </QuickButton>
          <QuickButton aria-label="汇总计算">
            <Svg s={14}><path d="M12.500 3.500v-2h-11l6 5.500-6 5.500h11v-2" strokeWidth="1.500" /></Svg>
          </QuickButton>
          <QuickButton aria-label="保存">
            <Svg s={14}><rect x=".75" y=".75" width="12.500" height="12.500" rx="1" fill={C.pale} strokeWidth="1.500" /><path d="M4 1v5h6V1M3.500 13V8.500h7V13M6 10v3" fill="#fff" /></Svg>
          </QuickButton>
          <QuickButton aria-label="自定义">
            <Svg s={8}><path d="M1 1.500h5" stroke="#555" /><path d="M1 4h5L3.500 7z" fill="#555" stroke="none" /></Svg>
          </QuickButton>
        </QuickAccess>
        <Title>{"广联达BIM安装计量GQI2017 - [C:\\Users\\Administrator\\Desktop\\练习\\17安装练习\\电气2.GQI4]"}</Title>
      </TitleBar>
      <TabBar>
        <ActiveTab aria-label="绘图" />
        {["工程量", "工具", "视图", "变更模块", "对量模块"].map((t) => <Tab key={t}>{t}</Tab>)}
      </TabBar>
      <Ribbon>
        {groups.map((g, i) => <RibbonGroup key={g.name} data={g} index={i} />)}
      </Ribbon>
      <ContextBar>
        <ComboBox label="专业" value="" short />
        <ComboBox label="构件类型" value="电线导管(电)" />
        <ComboBox label="构件" value="ZHGD-1" />
        <ComboBox label="分层" value="分层1" />
      </ContextBar>

      <Workspace>
        <SidePanel $edge="left">
          <PanelGrip />
          <SideTools $h={22} />
          <SideTools $h={31} />
        </SidePanel>
        <ListPanel>
          <PanelGrip><button aria-label="关闭构件列表"><Close /></button></PanelGrip>
          <PanelTitle>构件列表</PanelTitle>
          <ListTools>
            <ListToolRow>
              <ListTool>{icons.fresh}新建<Caret /></ListTool>
              <ListTool>{icons.remove}删除</ListTool>
              <ListTool>{icons.duplicate}复制</ListTool>
              <ListTool>{"构件库>>"}</ListTool>
            </ListToolRow>
            <ListToolRow>
              <ListTool>{icons.sort}排序<Caret /></ListTool>
              <ListTool>{icons.filter}过滤<Caret /></ListTool>
              <ListTool $disabled disabled>{icons.up}上移</ListTool>
              <ListTool $disabled disabled>{icons.down}下移</ListTool>
            </ListToolRow>
          </ListTools>
          <SearchRow>
            <SearchInput aria-label="搜索构件" placeholder="搜索构件..." />
            <svg width="12" height="12" viewBox="0 0 12 12" fill="none" stroke="#2a86c4" strokeWidth="1.400" aria-hidden="true">
              <circle cx="5" cy="5" r="3.800" /><path d="M8 8l3.500 3.500" strokeWidth="2" />
            </svg>
          </SearchRow>
          <TreeArea>
            <Tree>
              {tree.map((n) => (
                <TreeRow key={n.text} $level={n.level}>
                  <Twisty>
                    {n.open && <svg width="8" height="8" viewBox="0 0 8 8" aria-hidden="true"><path d="M7 1v6H1z" fill="#333" /></svg>}
                  </Twisty>
                  <TreeLabel $selected={n.selected}>{n.text}</TreeLabel>
                </TreeRow>
              ))}
            </Tree>
            <ScrollThumb />
          </TreeArea>
        </ListPanel>
        <Gutter>
          <GutterHandle aria-label="收起左侧">
            <svg width="4" height="6" viewBox="0 0 4 6" aria-hidden="true"><path d="M4 0v6L0 3z" fill="#c4c8cc" /></svg>
          </GutterHandle>
        </Gutter>
        <CanvasFrame>
          <Drawing />
          <ViewPalette />
        </CanvasFrame>
        <Gutter $wide>
          <GutterHandle aria-label="收起右侧">
            <svg width="4" height="6" viewBox="0 0 4 6" aria-hidden="true"><path d="M0 0v6l4-3z" fill="#c4c8cc" /></svg>
          </GutterHandle>
        </Gutter>
        <SidePanel $edge="right">
          <PanelGrip />
          <SideTools $h={22} />
          <SideSearch aria-label="搜索" placeholder="搜索" />
          <SideRows />
        </SidePanel>
      </Workspace>

      <StatusBar>
        <Readouts>
          <Readout>层高： 3.3</Readout>
          <Readout>底标高：4.5</Readout>
          <Readout $push>0</Readout>
        </Readouts>
        <StatusButton $w={25} aria-label="正交"><Svg s={14}><path d="M2.500 2v9h8V6h-8" stroke="#444" /></Svg></StatusButton>
        <StatusButton $w={36} $on aria-label="捕捉"><Svg s={18}><path d="M3 3h12v14M4 3v14" />{sq(1.5, 1.5)}</Svg><Caret /></StatusButton>
        <StatusButton $w={36} aria-label="偏移"><Svg s={18}><path d="M1 6h7M4.500 2.500v7M8 11.500h9" stroke="#333" /></Svg><Caret /></StatusButton>
        <StatusButton $w={25} $dim aria-label="交点"><Svg><path d="M1 1l14 14M15 1L1 15" stroke="#777" /></Svg></StatusButton>
        <StatusButton $w={36} aria-label="中点"><Svg><path d="M3 13L13 3" stroke="#333" /><circle cx="8" cy="8" r="2" fill="#333" stroke="none" /></Svg><Caret /></StatusButton>
        <StatusButton $w={73}>跨类型选择</StatusButton>
        <StatusButton $w={61}>折线选择</StatusButton>
        <StatusText>CAD图亮度：100%</StatusText>
        <ZoomControl>
          <RoundButton aria-label="调暗"><Svg s={6}><path d="M0 3h6" stroke="#444" strokeWidth="1.500" /></Svg></RoundButton>
          <Slider type="range" aria-label="CAD图亮度" defaultValue={100} />
          <RoundButton aria-label="调亮"><Svg s={6}><path d="M0 3h6M3 0v6" stroke="#444" strokeWidth="1.500" /></Svg></RoundButton>
        </ZoomControl>
        <StatusText>按鼠标左键指定插入点，按右键或ESC退出</StatusText>
      </StatusBar>

      <FloatWindow>
        <PanelGrip><button aria-label="关闭属性"><Close /></button></PanelGrip>
        <PanelTitle>属性</PanelTitle>
        <PropTable>
          <thead>
            <tr>
              <HeadCell $w={22} $blank aria-label="序号" />
              <HeadCell $w={111}>属性名称</HeadCell>
              <HeadCell $w={113} $active>属性值</HeadCell>
              <HeadCell $w={41}>附加</HeadCell>
            </tr>
          </thead>
          <tbody>
            {properties.map((p) => (
              <tr key={p.n}>
                <NumCell scope="row" $active={p.focus}>{p.n}</NumCell>
                <Cell $link={p.link}>
                  <CellLine>
                    {p.fold && (
                      <svg width="13" height="13" viewBox="0 0 13 13" fill="none" stroke="#333" aria-hidden="true">
                        <rect x=".5" y=".5" width="12" height="12" rx="1.500" /><path d="M4 6.500h5M6.500 4v5" />
                      </svg>
                    )}
                    {p.name}
                  </CellLine>
                </Cell>
                <Cell $focus={p.focus}>{p.value}</Cell>
                <Cell>
                  {p.check !== undefined && (
                    <CheckWrap>
                      <Check type="checkbox" defaultChecked={p.check} aria-label={`附加 ${p.name}`} />
                      {p.check && (
                        <svg width="10" height="8" viewBox="0 0 10 8" fill="none" stroke="#fff" strokeWidth="1.800" aria-hidden="true">
                          <path d="M1 3.500l3 3L9 1" />
                        </svg>
                      )}
                    </CheckWrap>
                  )}
                </Cell>
              </tr>
            ))}
          </tbody>
        </PropTable>
      </FloatWindow>
      <EdgeWindow />

      <Dialog role="dialog" aria-label="提示">
        <DialogHead>
          <DialogTitle>提示</DialogTitle>
          <button aria-label="关闭"><Close s={11} tone="#fff" /></button>
        </DialogHead>
        <DialogBody>
          <DialogMessage>
            <svg width="30" height="30" viewBox="0 0 30 30" aria-hidden="true">
              <circle cx="15" cy="15" r="15" fill="#277fd8" />
              <text x="15" y="24" textAnchor="middle" fontFamily="Liberation Serif" fontStyle="italic" fontWeight="700" fontSize="27" fill="#fff">i</text>
            </svg>
            <Message>ZHGD-1不能与AL2-1-N1重叠布置</Message>
          </DialogMessage>
          <DialogActions><Primary>确定</Primary></DialogActions>
        </DialogBody>
      </Dialog>
    </Shell>
  );
}
